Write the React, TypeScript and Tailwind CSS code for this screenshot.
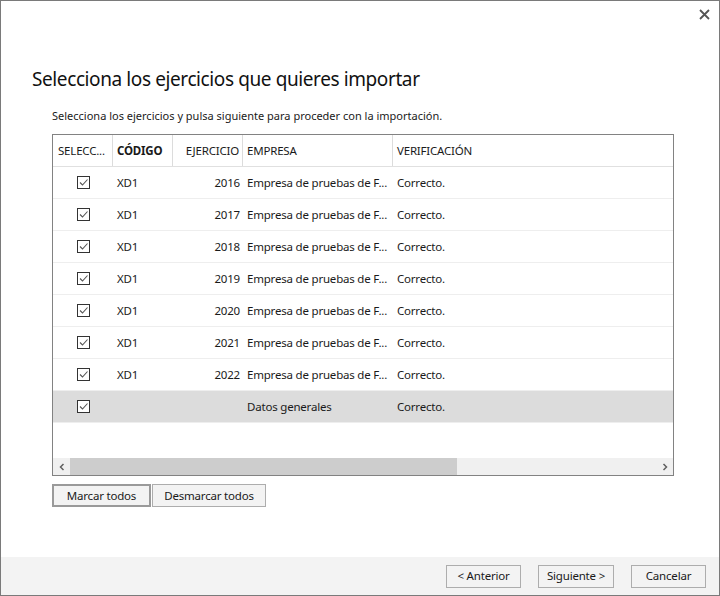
import React from "react";

const rows = [
  { code: "XD1", year: "2016", emp: "Empresa de pruebas de F...", ver: "Correcto." },
  { code: "XD1", year: "2017", emp: "Empresa de pruebas de F...", ver: "Correcto." },
  { code: "XD1", year: "2018", emp: "Empresa de pruebas de F...", ver: "Correcto." },
  { code: "XD1", year: "2019", emp: "Empresa de pruebas de F...", ver: "Correcto." },
  { code: "XD1", year: "2020", emp: "Empresa de pruebas de F...", ver: "Correcto." },
  { code: "XD1", year: "2021", emp: "Empresa de pruebas de F...", ver: "Correcto." },
  { code: "XD1", year: "2022", emp: "Empresa de pruebas de F...", ver: "Correcto." },
  { code: "", year: "", emp: "Datos generales", ver: "Correcto.", sel: true },
];

function Check() {
  return (
    <div className="w-[13px] h-[13px] border border-[#333333] bg-white flex items-center justify-center">
      <svg width="11" height="11" viewBox="0 0 11 11">
        <path d="M2 5.5 L4.5 8 L9.5 2.5" fill="none" stroke="#555" strokeWidth="1.1" />
      </svg>
    </div>
  );
}

export default function App() {
  return (
    <div
      className="w-[720px] h-[596px] bg-white border border-[#7a7a7a] flex flex-col text-[11.5px] tracking-[-0.2px] text-[#1a1a1a] relative"
      style={{ fontFamily: '"Noto Sans", "Open Sans", sans-serif' }}
    >
      <div className="absolute right-[7px] top-[5px] w-[16px] h-[16px] flex items-center justify-center">
        <svg width="11" height="11" viewBox="0 0 11 11">
          <path d="M1 1 L10 10 M10 1 L1 10" stroke="#555" strokeWidth="1.8" />
        </svg>
      </div>
      <div className="flex-1 flex flex-col">
        <div className="pl-[31px] pt-[64px] text-[19px] tracking-[-0.4px] leading-[28px] text-[#111]">
          Selecciona los ejercicios que quieres importar
        </div>
        <div className="pl-[51px] pt-[15px] leading-[16px] text-[11px] tracking-[0px]">
          Selecciona los ejercicios y pulsa siguiente para proceder con la importación.
        </div>
        <div className="ml-[51px] mt-[10px] w-[622px] h-[342px] border border-[#828282] flex flex-col">
          <div className="flex h-[32px] border-b border-[#e0e0e0] items-center">
            <div className="w-[60px] h-full flex items-center pl-[5px] border-r border-[#dcdcdc]">SELECC...</div>
            <div className="w-[60px] h-full flex items-center pl-[4px] border-r border-[#dcdcdc] font-bold">CÓDIGO</div>
            <div className="w-[70px] h-full flex items-center justify-end pr-[3px] border-r border-[#dcdcdc]">EJERCICIO</div>
            <div className="w-[150px] h-full flex items-center pl-[4px] border-r border-[#dcdcdc]">EMPRESA</div>
            <div className="flex-1 h-full flex items-center pl-[4px]">VERIFICACIÓN</div>
          </div>
          <div className="flex-1 flex flex-col">
            {rows.map((r, i) => (
              <div
                key={i}
                className={`flex h-[32px] items-center border-b ${r.sel ? "bg-[#dcdcdc] border-[#eeeeee]" : "border-[#eeeeee]"}`}
              >
                <div className="w-[60px] flex justify-center pl-[1px]">
                  <Check />
                </div>
                <div className="w-[60px] pl-[4px]">{r.code}</div>
                <div className="w-[70px] text-right pr-[3px]">{r.year}</div>
                <div className="w-[150px] pl-[4px] whitespace-nowrap">{r.emp}</div>
                <div className="flex-1 pl-[4px]">{r.ver}</div>
              </div>
            ))}
          </div>
          <div className="h-[17px] bg-[#f0f0f0] flex items-center">
            <div className="w-[17px] h-full flex items-center justify-center">
              <svg width="8" height="8" viewBox="0 0 8 8">
                <path d="M5.5 1 L2.5 4 L5.5 7" fill="none" stroke="#606060" strokeWidth="1.5" />
              </svg>
            </div>
            <div className="w-[387px] h-full bg-[#cdcdcd]" />
            <div className="flex-1" />
            <div className="w-[17px] h-full flex items-center justify-center">
              <svg width="8" height="8" viewBox="0 0 8 8">
                <path d="M2.5 1 L5.5 4 L2.5 7" fill="none" stroke="#606060" strokeWidth="1.5" />
              </svg>
            </div>
          </div>
        </div>
        <div className="ml-[51px] mt-[8px] flex gap-[1px]">
          <button className="w-[99px] h-[23px] border-2 border-[#9a9a9a] bg-[#f3f3f3] flex items-center justify-center leading-none">
            Marcar todos
          </button>
          <button className="w-[114px] h-[23px] border border-[#adadad] bg-[#f3f3f3] flex items-center justify-center leading-none">
            Desmarcar todos
          </button>
        </div>
      </div>
      <div className="h-[38px] bg-[#f3f3f3] flex items-center justify-end pr-[13px] gap-[17px]">
        <button className="w-[75px] h-[23px] border border-[#adadad] bg-[#f3f3f3] flex items-center justify-center leading-none">
          &lt; Anterior
        </button>
        <button className="w-[76px] h-[23px] border border-[#adadad] bg-[#f3f3f3] flex items-center justify-center leading-none">
          Siguiente &gt;
        </button>
        <button className="w-[75px] h-[23px] border border-[#adadad] bg-[#f3f3f3] flex items-center justify-center leading-none">
          Cancelar
        </button>
      </div>
    </div>
  );
}
